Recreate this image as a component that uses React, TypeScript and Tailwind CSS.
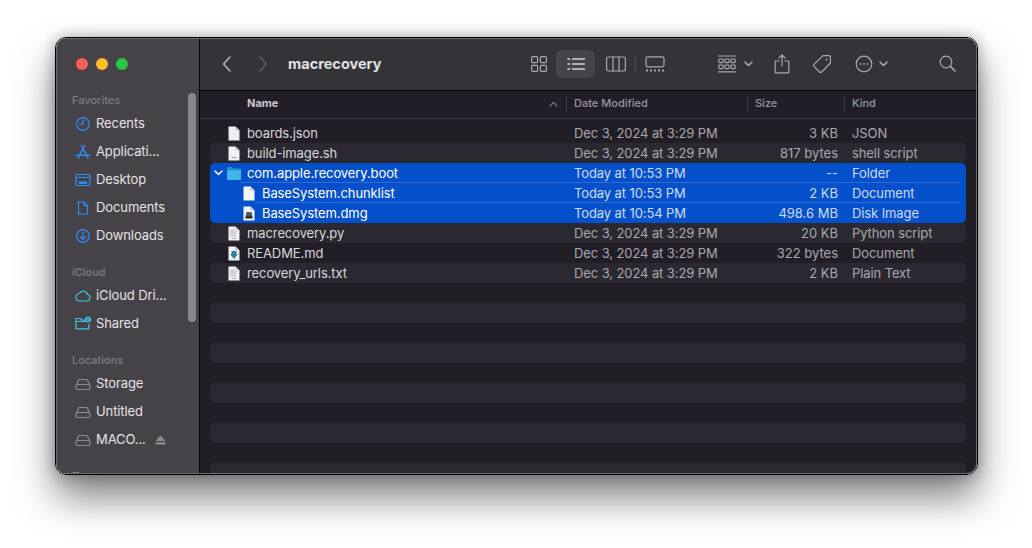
import React from "react";

const font = { fontFamily: "Inter, 'Liberation Sans', sans-serif" };

const S = ({ w, h, children, className }: { w: number; h: number; children: React.ReactNode; className?: string }) => (
  <svg width={w} height={h} viewBox={`0 0 ${w} ${h}`} fill="none" stroke="currentColor" strokeWidth={1.2} strokeLinecap="round" strokeLinejoin="round" className={className}>
    {children}
  </svg>
);

const Sidebar = {
  Recents: () => (
    <S w={16} h={16}><circle cx="8" cy="8" r="6.3" /><path d="M8 3.8V8.3H4.8" /></S>
  ),
  Apps: () => (
    <S w={16} h={16}><path d="M9.8 1.5 4 11.8M6.2 1.5 12 11.8M1.2 11.2h13.6M3 14.2l1.4-2.6M13 14.2l-1.4-2.6" strokeWidth={1.4} /></S>
  ),
  Desktop: () => (
    <S w={16} h={16}><rect x="1" y="2.5" width="14" height="11" rx="1.2" /><path d="M1 5.5h14" /><path d="M4 10.8h8" strokeWidth={2.4} strokeLinecap="butt" /></S>
  ),
  Docs: () => (
    <S w={16} h={16}><path d="M3.5 2h5.5l3.5 3.6V14H3.5z" /><path d="M9 2v3.6h3.5" /></S>
  ),
  Downloads: () => (
    <S w={16} h={16}><circle cx="8" cy="8" r="6.3" /><path d="M8 4.2v7M5.2 8.6 8 11.3l2.8-2.7" /></S>
  ),
  Cloud: () => (
    <S w={16} h={16}><path d="M4.2 13h7.6a3.3 3.3 0 0 0 .7-6.5 4.4 4.4 0 0 0-8.2-1A3.8 3.8 0 0 0 4.2 13z" /></S>
  ),
  Shared: () => (
    <S w={16} h={16}>
      <path d="M13.8 8.5v4.3H1V2.5h4.6l1.4 1.7h3" />
      <path d="M1 5.5h9" />
      <circle cx="13" cy="3.6" r="3" fill="currentColor" stroke="none" />
      <path d="M13 2.2v2.6" stroke="#454348" />
    </S>
  ),
  Drive: () => (
    <S w={16} h={16}><path d="M1.5 9 3.8 3.5h8.4L14.5 9" /><rect x="1" y="8.5" width="14" height="5" rx="1.6" /></S>
  ),
};

function Item({ icon, label, tone, eject }: { icon: React.ReactNode; label: string; tone: string; eject?: boolean }) {
  return (
    <div className="flex h-[28px] items-center pl-[18px]">
      <span className={`flex w-[16px] justify-center ${tone}`}>{icon}</span>
      <span className="ml-[5px] text-[13px] tracking-[-0.1px] text-[#e4e3e6]">{label}</span>
      {eject && (
        <svg width="11" height="10" viewBox="0 0 11 10" className="ml-[9px]" fill="#8e8d92">
          <path d="M5.5 0.5 10.5 6H.5z" />
          <rect x=".5" y="7.3" width="10" height="2.2" />
        </svg>
      )}
    </div>
  );
}

const Heading = ({ children, className }: { children: React.ReactNode; className: string }) => (
  <div className={`pl-[15px] text-[11px] font-medium leading-[14px] text-[#7d7c82] ${className}`}>{children}</div>
);

function Doc({ kind = "plain", selected }: { kind?: "plain" | "sh" | "py" | "md" | "txt" | "dmg"; selected?: boolean }) {
  return (
    <svg width="12" height="15" viewBox="0 0 12 15">
      <path d="M.5.5h7L11.5 4.5v10H.5z" fill={selected ? "#f5f6f8" : kind === "plain" ? "#eeeef0" : "#f2f2f3"} />
      <path d="M7.5.5v4h4z" fill="#c8c8cc" />
      {kind === "sh" && <path d="M3.5 11.5h5" stroke="#9a9a9a" strokeWidth="1" />}
      {(kind === "py" || kind === "txt") && (
        <path d="M2 4h4M2 6h7M2 8h6M2 10h7M4 12.5h4" stroke="#b4b4b8" strokeWidth="1" />
      )}
      {kind === "md" && <path d="M3.5 5h5v3h1.5L6 13 2 8h1.5z" fill="#3f7ea6" />}
      {kind === "dmg" && (
        <>
          <path d="M3.5 6h5l1 5h-7z" fill="#555" />
          <rect x="2.5" y="10.5" width="7" height="2" fill="#222" />
        </>
      )}
    </svg>
  );
}

const Folder = () => (
  <svg width="16" height="15" viewBox="0 0 16 15">
    <path d="M1 2.2C1 1.5 1.5 1 2.2 1h3.6l1.6 1.5H14c.6 0 1 .5 1 1V13c0 .6-.5 1-1 1H2c-.6 0-1-.4-1-1z" fill="#1e93d0" />
    <path d="M1 4.2h14V13c0 .6-.5 1-1 1H2c-.6 0-1-.4-1-1z" fill="#3fb6e8" />
  </svg>
);

type R = { name: string; date: string; size: string; kind: string; icon: React.ReactNode; alt?: boolean };

const dateOld = "Dec 3, 2024 at 3:29 PM";

function Row({ r }: { r: R }) {
  return (
    <div className={`flex h-[20px] items-center rounded-[5px] pt-[1px] text-[13px] tracking-[-0.1px] text-[#c6c5c9] ${r.alt ? "bg-[#2a2830]" : ""}`}>
      <span className="flex w-[37px] justify-end pr-[7px]">{r.icon}</span>
      <span className="w-[327px] text-[#d9d8db]">{r.name}</span>
      <span className="w-[176px] text-[#a9a8ad]">{r.date}</span>
      <span className="w-[88px] text-right tracking-normal text-[#a9a8ad]">{r.size}</span>
      <span className="ml-[14px] text-[#a9a8ad]">{r.kind}</span>
    </div>
  );
}

function SelRow({ name, date, size, kind, icon, indent, line }: { name: string; date: string; size: string; kind: string; icon: React.ReactNode; indent?: boolean; line?: boolean }) {
  return (
    <div className="relative flex h-[20px] items-center pt-[1px] text-[13px] tracking-[-0.1px] text-[#cddcf6]">
      <span className={`flex justify-end pr-[7px] ${indent ? "w-[52px]" : "w-[37px]"}`}>{icon}</span>
      <span className={`text-white ${indent ? "w-[312px]" : "w-[327px]"}`}>{name}</span>
      <span className="w-[176px]">{date}</span>
      <span className="w-[88px] text-right tracking-normal">{size}</span>
      <span className="ml-[14px]">{kind}</span>
      {line && <span className={`absolute bottom-0 right-[6px] h-px bg-[#2f6bd6] ${indent ? "left-[45px]" : "left-[30px]"}`} />}
    </div>
  );
}

const Empty = ({ alt }: { alt?: boolean }) => <div className={`h-[20px] shrink-0 rounded-[5px] ${alt ? "bg-[#2a2830]" : ""}`} />;

function Toolbar() {
  return (
    <div className="flex h-[51px] shrink-0 items-center bg-[#343338] pb-[2px] text-[#a9a8ad]">
      <S w={12} h={18} className="ml-[21px] text-[#b5b4b8]"><path d="M9 2 2.5 9 9 16" strokeWidth={1.5} /></S>
      <S w={12} h={18} className="ml-[24px] text-[#5f5e63]"><path d="M3 2l6.5 7L3 16" strokeWidth={1.5} /></S>
      <span className="ml-[19px] w-[243px] text-[14.5px] font-bold text-[#e2e1e4]">macrecovery</span>
      <S w={16} h={16}>
        <rect x=".6" y=".6" width="6" height="6" rx="1" /><rect x="9.4" y=".6" width="6" height="6" rx="1" />
        <rect x=".6" y="9.4" width="6" height="6" rx="1" /><rect x="9.4" y="9.4" width="6" height="6" rx="1" />
      </S>
      <div className="ml-[9px] flex h-[28px] w-[39px] items-center justify-center rounded-[6px] bg-[#454449] text-[#d5d4d8]">
        <S w={18} h={14}>
          <path d="M5.5 2h12M5.5 7h12M5.5 12h12" strokeWidth={1.4} />
          <path d="M1 2h1.4M1 7h1.4M1 12h1.4" strokeWidth={1.6} />
        </S>
      </div>
      <S w={20} h={16} className="ml-[11px]">
        <rect x=".6" y="1" width="18.8" height="14" rx="2" /><path d="M7 1v14M13 1v14" />
      </S>
      <span className="ml-[9px] h-[20px] w-px bg-[#48474c]" />
      <S w={20} h={16} className="ml-[9px]">
        <rect x="1" y=".8" width="18" height="10" rx="1.8" />
        <path d="M1 14.5h2M5 14.5h2M9 14.5h2M13 14.5h2M17 14.5h2" strokeWidth={1.8} strokeLinecap="butt" />
      </S>
      <S w={18} h={18} className="ml-[53px]">
        <path d="M.5 1h17M.5 16.8h17" />
        <rect x=".8" y="4" width="4.2" height="3.6" rx=".8" /><rect x="6.9" y="4" width="4.2" height="3.6" rx=".8" /><rect x="13" y="4" width="4.2" height="3.6" rx=".8" />
        <rect x=".8" y="10" width="4.2" height="3.6" rx=".8" /><rect x="6.9" y="10" width="4.2" height="3.6" rx=".8" /><rect x="13" y="10" width="4.2" height="3.6" rx=".8" />
      </S>
      <S w={9} h={6} className="ml-[8px]"><path d="M1 1l3.5 3.5L8 1" strokeWidth={1.5} /></S>
      <S w={16} h={20} className="ml-[21px]">
        <path d="M8 12V1.2M4.8 4.2 8 1l3.2 3.2" />
        <path d="M5.2 7H1.2v11.8h13.6V7h-4" />
      </S>
      <S w={20} h={20} className="ml-[22px]">
        <path d="M11 1.6h6.2c.7 0 1.2.5 1.2 1.2V9L9.6 18a1.4 1.4 0 0 1-2 0l-5.6-5.6a1.4 1.4 0 0 1 0-2z" />
        <circle cx="14.6" cy="5.4" r="1" fill="currentColor" stroke="none" />
      </S>
      <S w={18} h={18} className="ml-[23px]">
        <circle cx="9" cy="9" r="7.8" />
        <circle cx="5.6" cy="9" r=".9" fill="currentColor" stroke="none" /><circle cx="9" cy="9" r=".9" fill="currentColor" stroke="none" /><circle cx="12.4" cy="9" r=".9" fill="currentColor" stroke="none" />
      </S>
      <S w={9} h={6} className="ml-[6px]"><path d="M1 1l3.5 3.5L8 1" strokeWidth={1.5} /></S>
      <S w={17} h={17} className="ml-[51px]">
        <circle cx="7" cy="7" r="5.8" /><path d="M11.4 11.4 16 16" strokeWidth={1.6} />
      </S>
    </div>
  );
}

function Header() {
  const sep = <span className="block h-[16px] w-px bg-[#3b3941]" />;
  return (
    <div className="flex h-[28px] shrink-0 items-center border-b border-[#3c3a42] bg-[#211e28] pb-[2px] text-[11px] font-medium text-[#98979c]">
      <span className="ml-[47px] w-[302px] font-bold text-[#c9c8cc]">Name</span>
      <S w={9} h={6} className="text-[#77767b]"><path d="M1 5l3.5-3.5L8 5" /></S>
      <span className="ml-[8px]">{sep}</span>
      <span className="ml-[7px] w-[173px]">Date Modified</span>
      {sep}
      <span className="ml-[7px] w-[89px]">Size</span>
      {sep}
      <span className="ml-[7px]">Kind</span>
    </div>
  );
}

export default function App() {
  const chev = (
    <svg width="9" height="6" viewBox="0 0 9 6" fill="none" stroke="#fff" strokeWidth="1.5" strokeLinecap="round" strokeLinejoin="round" className="absolute left-[4px] top-[7px]">
      <path d="M1 1l3.5 3.5L8 1" />
    </svg>
  );
  return (
    <div className="h-[548px] w-[1032px] overflow-hidden bg-white pl-[55px] pt-[37px]" style={font}>
      <div className="h-[438px] w-[923px] overflow-hidden rounded-[11px] border border-black shadow-[0_22px_38px_rgba(0,0,0,0.5),0_0_14px_rgba(0,0,0,0.3)]">
        <div className="relative flex h-full w-full overflow-hidden rounded-[10px] border border-[#6c6b70] bg-[#211e26] antialiased">
          <aside className="relative w-[143px] shrink-0 border-r border-black bg-[#454348]">
            <div className="flex gap-[8px] pl-[19px] pt-[19px]">
              <span className="h-[12px] w-[12px] rounded-full bg-[#fe5f57]" />
              <span className="h-[12px] w-[12px] rounded-full bg-[#febb2e]" />
              <span className="h-[12px] w-[12px] rounded-full bg-[#28c840]" />
            </div>
            <Heading className="mt-[23px]">Favorites</Heading>
            <div className="mt-[3px]">
              <Item tone="text-[#2e8df5]" icon={<Sidebar.Recents />} label="Recents" />
              <Item tone="text-[#2e8df5]" icon={<Sidebar.Apps />} label="Applicati..." />
              <Item tone="text-[#2e8df5]" icon={<Sidebar.Desktop />} label="Desktop" />
              <Item tone="text-[#2e8df5]" icon={<Sidebar.Docs />} label="Documents" />
              <Item tone="text-[#2e8df5]" icon={<Sidebar.Downloads />} label="Downloads" />
            </div>
            <Heading className="mt-[15px]">iCloud</Heading>
            <div className="mt-[3px]">
              <Item tone="text-[#3fc3e6]" icon={<Sidebar.Cloud />} label="iCloud Dri..." />
              <Item tone="text-[#3fc3e6]" icon={<Sidebar.Shared />} label="Shared" />
            </div>
            <Heading className="mt-[15px]">Locations</Heading>
            <div className="mt-[3px]">
              <Item tone="text-[#8b8a8f]" icon={<Sidebar.Drive />} label="Storage" />
              <Item tone="text-[#8b8a8f]" icon={<Sidebar.Drive />} label="Untitled" />
              <Item tone="text-[#8b8a8f]" icon={<Sidebar.Drive />} label="MACO..." eject />
            </div>
            <Heading className="mt-[15px]">Tags</Heading>
            <div className="absolute left-[131px] top-[54px] h-[229px] w-[8px] rounded-full bg-[#87868b]" />
          </aside>
          <main className="flex min-w-0 flex-1 flex-col overflow-hidden">
            <Toolbar />
            <div className="h-px shrink-0 bg-black" />
            <Header />
            <div className="flex flex-col px-[10px] pt-[4px]">
              <Row r={{ name: "boards.json", date: dateOld, size: "3 KB", kind: "JSON", icon: <Doc /> }} />
              <Row r={{ name: "build-image.sh", date: dateOld, size: "817 bytes", kind: "shell script", icon: <Doc kind="sh" />, alt: true }} />
              <div className="relative rounded-[5px] bg-[#0450cb]">
                {chev}
                <SelRow name="com.apple.recovery.boot" date="Today at 10:53 PM" size="--" kind="Folder" icon={<span className="mr-[-2px] flex"><Folder /></span>} line />
                <SelRow name="BaseSystem.chunklist" date="Today at 10:53 PM" size="2 KB" kind="Document" icon={<Doc selected />} indent line />
                <SelRow name="BaseSystem.dmg" date="Today at 10:54 PM" size="498.6 MB" kind="Disk Image" icon={<Doc kind="dmg" selected />} indent />
              </div>
              <Row r={{ name: "macrecovery.py", date: dateOld, size: "20 KB", kind: "Python script", icon: <Doc kind="py" />, alt: true }} />
              <Row r={{ name: "README.md", date: dateOld, size: "322 bytes", kind: "Document", icon: <Doc kind="md" /> }} />
              <Row r={{ name: "recovery_urls.txt", date: dateOld, size: "2 KB", kind: "Plain Text", icon: <Doc kind="txt" />, alt: true }} />
              {[false, true, false, true, false, true, false, true, false, true].map((a, i) => (
                <Empty key={i} alt={a} />
              ))}
            </div>
          </main>
        </div>
      </div>
    </div>
  );
}
